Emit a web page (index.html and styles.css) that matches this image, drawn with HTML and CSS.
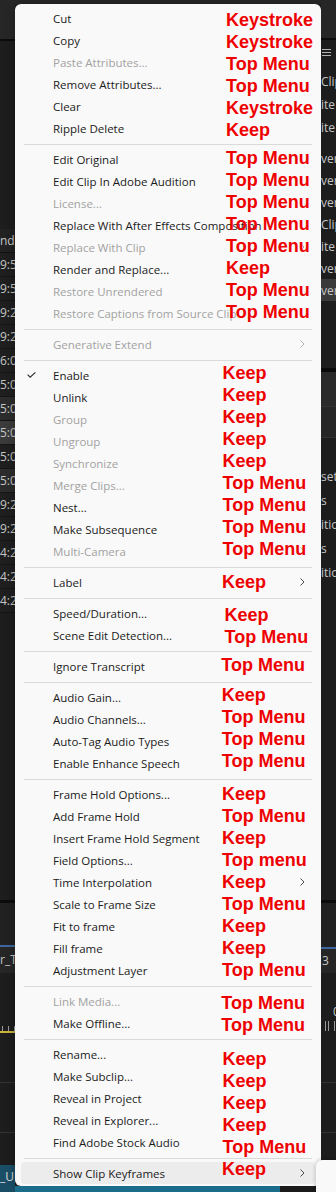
FILE: index.html
```html
<!DOCTYPE html>
<html lang="en">
<head>
    <meta charset="UTF-8">
    <title>Clip context menu</title>
    <link rel="stylesheet" href="styles.css">
</head>
<body>
    <div class="stage">
        <!-- timeline panel peeking out on the left -->
        <aside class="side side-left">
            <div class="p-head"></div>
            <div class="p-rule"></div>
            <div class="p-dark"></div>
            <div class="p-colhead">nd</div>
            <div class="p-row">9:55</div>
            <div class="p-row">9:55</div>
            <div class="p-row">9:22</div>
            <div class="p-row">9:22</div>
            <div class="p-row">6:01</div>
            <div class="p-row">5:00</div>
            <div class="p-row alt">5:00</div>
            <div class="p-row sel">5:00</div>
            <div class="p-row">5:00</div>
            <div class="p-row alt">5:00</div>
            <div class="p-row">9:22</div>
            <div class="p-row">9:22</div>
            <div class="p-row">4:22</div>
            <div class="p-row">4:22</div>
            <div class="p-row">4:22</div>
            <div class="p-dark"></div>
            <div class="p-rule"></div>
            <div class="p-mid"></div>
            <div class="p-blue"></div>
            <div class="p-tab">r_T</div>
            <div class="p-dark"></div>
            <div class="p-ticks"></div>
            <div class="p-yellow"></div>
            <div class="p-dark"></div>
            <div class="p-line"></div>
            <div class="p-dark"></div>
            <div class="p-line"></div>
            <div class="p-dark"></div>
            <div class="p-clip">_UH</div>
        </aside>

        <div class="center">
            <div class="center-top"></div>

            <div class="menu">
                <div class="group g-edit">
                    <div class="item">Cut<span class="note">Keystroke</span></div>
                    <div class="item">Copy<span class="note">Keystroke</span></div>
                    <div class="item off">Paste Attributes...<span class="note">Top Menu</span></div>
                    <div class="item">Remove Attributes...<span class="note">Top Menu</span></div>
                    <div class="item">Clear<span class="note">Keystroke</span></div>
                    <div class="item">Ripple Delete<span class="note">Keep</span></div>
                </div>
                <div class="sep"></div>
                <div class="group g-source">
                    <div class="item">Edit Original<span class="note">Top Menu</span></div>
                    <div class="item">Edit Clip In Adobe Audition<span class="note">Top Menu</span></div>
                    <div class="item off">License...<span class="note">Top Menu</span></div>
                    <div class="item">Replace With After Effects Composition<span class="note">Top Menu</span></div>
                    <div class="item off">Replace With Clip<span class="arrow"><svg width="5" height="8" viewBox="0 0 5 8"><path d="M0.5 0.5L4 4L0.5 7.5"/></svg></span><span class="note">Top Menu</span></div>
                    <div class="item">Render and Replace...<span class="note">Keep</span></div>
                    <div class="item off">Restore Unrendered<span class="note">Top Menu</span></div>
                    <div class="item off">Restore Captions from Source Clip<span class="note">Top Menu</span></div>
                </div>
                <div class="sep"></div>
                <div class="group">
                    <div class="item off">Generative Extend<span class="arrow"><svg width="5" height="8" viewBox="0 0 5 8"><path d="M0.5 0.5L4 4L0.5 7.5"/></svg></span></div>
                </div>
                <div class="sep"></div>
                <div class="group g-link">
                    <div class="item"><span class="check"><svg width="9" height="6" viewBox="0 0 9 6"><path d="M0.6 2.6L3.2 5.2L8.4 0.4"/></svg></span>Enable<span class="note">Keep</span></div>
                    <div class="item">Unlink<span class="note">Keep</span></div>
                    <div class="item off">Group<span class="note">Keep</span></div>
                    <div class="item off">Ungroup<span class="note">Keep</span></div>
                    <div class="item off">Synchronize<span class="note">Keep</span></div>
                    <div class="item off">Merge Clips...<span class="note">Top Menu</span></div>
                    <div class="item">Nest...<span class="note">Top Menu</span></div>
                    <div class="item">Make Subsequence<span class="note">Top Menu</span></div>
                    <div class="item off">Multi-Camera<span class="arrow"><svg width="5" height="8" viewBox="0 0 5 8"><path d="M0.5 0.5L4 4L0.5 7.5"/></svg></span><span class="note">Top Menu</span></div>
                </div>
                <div class="sep"></div>
                <div class="group g-label">
                    <div class="item">Label<span class="arrow"><svg width="5" height="8" viewBox="0 0 5 8"><path d="M0.5 0.5L4 4L0.5 7.5"/></svg></span><span class="note">Keep</span></div>
                </div>
                <div class="sep"></div>
                <div class="group g-speed">
                    <div class="item">Speed/Duration...<span class="note">Keep</span></div>
                    <div class="item">Scene Edit Detection...<span class="note">Top Menu</span></div>
                </div>
                <div class="sep"></div>
                <div class="group g-transcript">
                    <div class="item">Ignore Transcript<span class="note">Top Menu</span></div>
                </div>
                <div class="sep"></div>
                <div class="group g-audio">
                    <div class="item">Audio Gain...<span class="note">Keep</span></div>
                    <div class="item">Audio Channels...<span class="note">Top Menu</span></div>
                    <div class="item">Auto-Tag Audio Types<span class="note">Top Menu</span></div>
                    <div class="item">Enable Enhance Speech<span class="note">Top Menu</span></div>
                </div>
                <div class="sep"></div>
                <div class="group g-frame">
                    <div class="item">Frame Hold Options...<span class="note">Keep</span></div>
                    <div class="item">Add Frame Hold<span class="note">Top Menu</span></div>
                    <div class="item">Insert Frame Hold Segment<span class="note">Keep</span></div>
                    <div class="item">Field Options...<span class="note">Top menu</span></div>
                    <div class="item">Time Interpolation<span class="arrow"><svg width="5" height="8" viewBox="0 0 5 8"><path d="M0.5 0.5L4 4L0.5 7.5"/></svg></span><span class="note">Keep</span></div>
                    <div class="item">Scale to Frame Size<span class="note">Top Menu</span></div>
                    <div class="item">Fit to frame<span class="note">Keep</span></div>
                    <div class="item">Fill frame<span class="note">Keep</span></div>
                    <div class="item">Adjustment Layer<span class="note">Top Menu</span></div>
                </div>
                <div class="sep"></div>
                <div class="group g-media">
                    <div class="item off">Link Media...<span class="note">Top Menu</span></div>
                    <div class="item">Make Offline...<span class="note">Top Menu</span></div>
                </div>
                <div class="sep"></div>
                <div class="group g-project">
                    <div class="item">Rename...<span class="note">Keep</span></div>
                    <div class="item">Make Subclip...<span class="note">Keep</span></div>
                    <div class="item">Reveal in Project<span class="note">Keep</span></div>
                    <div class="item">Reveal in Explorer...<span class="note">Keep</span></div>
                    <div class="item">Find Adobe Stock Audio<span class="note">Top Menu</span></div>
                </div>
                <div class="sep"></div>
                <div class="group g-keys">
                    <div class="item hover">Show Clip Keyframes<span class="arrow"><svg width="5" height="8" viewBox="0 0 5 8"><path d="M0.5 0.5L4 4L0.5 7.5"/></svg></span><span class="note">Keep</span></div>
                </div>
            </div>

            <div class="center-bottom"><span class="bottom-clip"></span></div>
        </div>

        <!-- effects / project panel on the right -->
        <aside class="side side-right">
            <div class="p-head"></div>
            <div class="p-rule"></div>
            <div class="p-burger"><svg width="9" height="9" viewBox="0 0 9 9"><path d="M0 1.5H9M0 4.5H9M0 7.5H9"/></svg></div>
            <div class="p-item">Clip</div>
            <div class="p-item">ite</div>
            <div class="p-item">ite</div>
            <div class="p-dark"></div>
            <div class="p-item">ver</div>
            <div class="p-item">ver</div>
            <div class="p-item">ver</div>
            <div class="p-item">Clip</div>
            <div class="p-item">ite</div>
            <div class="p-item">ver</div>
            <div class="p-item sel">ver</div>
            <div class="p-dark"></div>
            <div class="p-black"></div>
            <div class="p-bar"></div>
            <div class="p-line"></div>
            <div class="p-bar2"></div>
            <div class="p-line"></div>
            <div class="p-dark"></div>
            <div class="p-row">sets</div>
            <div class="p-row">s</div>
            <div class="p-row">itio</div>
            <div class="p-row">s</div>
            <div class="p-row">itio</div>
            <div class="p-dark"></div>
            <div class="p-rule"></div>
            <div class="p-mid"></div>
            <div class="p-blue"></div>
            <div class="p-tab">3</div>
            <div class="p-dark"></div>
            <div class="p-time">0</div>
            <div class="p-ticks"></div>
            <div class="p-dark"></div>
            <div class="p-line"></div>
            <div class="p-dark"></div>
            <div class="p-line"></div>
            <div class="p-dark"></div>
        </aside>

        <div class="submenu"></div>
    </div>
</body>
</html>
```
FILE: styles.css
```css
:root {
    --menu-bg: #f9f9f9;
    --menu-text: #1b1b1b;
    --menu-off: #a2a2a2;
    --menu-sep: #dadada;
    --menu-hover: #ececec;
    --note-red: #ee0000;
    --panel-bg: #1d1d1d;
    --panel-text: #c6c6c6;
}

* {
    margin: 0;
    padding: 0;
    box-sizing: border-box;
}

body {
    background-color: var(--panel-bg);
    font-family: 'Open Sans', 'Noto Sans', sans-serif;
}

.stage {
    position: relative;
    display: grid;
    grid-template-columns: 15px 306px 15px;
    width: 336px;
    height: 1192px;
    overflow: hidden;
}

/* ---------- panels behind the menu ---------- */

.side {
    display: grid;
    overflow: hidden;
    font-size: 12px;
    color: var(--panel-text);
    white-space: nowrap;
}

.side > div {
    overflow: hidden;
    background-color: var(--panel-bg);
}

.side-left {
    grid-template-rows: 39px 2px 188px 24px repeat(15, 24px) 287px 3px 42px 2px 26px 53px 5px 2px 49px 1px 49px 1px 32px 27px;
}

.side-right {
    grid-template-rows: 38px 2px 30px repeat(3, 23px) 8px repeat(7, 22px) 67px 4px 34px 1px 30px 1px 27px repeat(5, 24px) 315px 3px 44px 2px 24px 30px 18px 10px 51px 1px 49px 1px 59px;
}

.side .p-head {
    background-color: #262626;
}

.side .p-rule {
    background-color: #0c0c0c;
}

.side .p-line {
    background-color: #333333;
}

.side .p-mid {
    background-color: #212121;
}

.side .p-blue {
    background-color: #3d67a0;
}

.side .p-tab {
    background-color: #262626;
    line-height: 26px;
}

.side-right .p-tab {
    line-height: 24px;
    padding-left: 1px;
}

.side .p-colhead {
    background-color: #222222;
    border-bottom: 1px solid #111111;
    line-height: 23px;
}

.side .p-row {
    background-color: #1f1f1f;
    border-bottom: 1px solid #141414;
    line-height: 23px;
}

.side .p-row.alt {
    background-color: #2c2c2c;
}

.side .p-row.sel {
    background-color: #3b3b3b;
}

.side-right .p-row {
    border-bottom: none;
    background-color: var(--panel-bg);
    line-height: 24px;
}

.side .p-ticks {
    background-image: repeating-linear-gradient(90deg, #9a9a9a 0 1px, transparent 1px 6px);
    background-position: 2px 0;
}

.side-right .p-ticks {
    background-position: 7px 0;
}

.side .p-yellow {
    background-color: #cbb43c;
}

.side .p-clip {
    background-color: #1a4e66;
    color: #dcdcdc;
    line-height: 24px;
}

.side .p-burger {
    padding: 8px 0 0 1px;
}

.p-burger svg {
    display: block;
    stroke: #b4b4b4;
    stroke-width: 1;
}

.side .p-item {
    line-height: 23px;
}

.side .p-item.sel {
    background-color: #3a3a3a;
}

.side .p-black {
    background-color: #0a0a0a;
}

.side .p-bar {
    background-color: #2a2a2a;
}

.side .p-bar2 {
    background-color: #262626;
}

.side .p-time {
    line-height: 18px;
    padding-left: 12px;
}

/* ---------- middle column ---------- */

.center {
    display: flex;
    flex-direction: column;
}

.center-top {
    height: 4px;
    background-color: #262626;
}

.center-bottom {
    display: flex;
    flex: 1;
    background-color: #1b1b1b;
}

.bottom-clip {
    width: 265px;
    background-color: #1c6d8b;
}

/* ---------- context menu ---------- */

.menu {
    background-color: var(--menu-bg);
    border-radius: 6px;
    padding: 3px 0 2px;
    box-shadow: 0 2px 8px rgba(0, 0, 0, 0.35);
}

.group {
    --nx: 201px;
    --ny: 0px;
}

.g-edit { --nx: 205px; --ny: 2px; }
.g-source { --nx: 205px; --ny: -1px; }
.g-link { --nx: 201.5px; --ny: -2px; }
.g-label { --nx: 201px; --ny: 0px; }
.g-speed { --nx: 203.5px; --ny: 2px; }
.g-transcript { --nx: 200.3px; --ny: -1px; }
.g-audio { --nx: 200.8px; --ny: -2px; }
.g-frame { --nx: 201px; --ny: 0px; }
.g-media { --nx: 200.3px; --ny: 2px; }
.g-project { --nx: 201.5px; --ny: 5px; }
.g-keys { --nx: 201px; --ny: -4.5px; }

.item {
    position: relative;
    display: flex;
    align-items: center;
    height: 22px;
    margin: 0 6px;
    padding: 0 10px 0 32px;
    font-size: 11.5px;
    color: var(--menu-text);
    white-space: nowrap;
    border-radius: 4px;
}

.item.off {
    color: var(--menu-off);
}

.item.hover {
    background-color: var(--menu-hover);
}

.check {
    display: flex;
    width: 26px;
    margin-left: -26px;
}

.check svg {
    fill: none;
    stroke: #2a2a2a;
    stroke-width: 1.1;
}

.arrow {
    display: flex;
    margin-left: auto;
}

.arrow svg {
    fill: none;
    stroke: #4a4a4a;
    stroke-width: 1;
}

.item.off .arrow svg {
    stroke: #b0b0b0;
}

.sep {
    height: 1px;
    margin: 5px 9px 3px;
    background-color: var(--menu-sep);
}

/* red hand-written notes pasted over the screenshot */
.note {
    position: absolute;
    z-index: 1;
    left: var(--nx);
    top: var(--ny);
    font-family: 'Liberation Sans', Arial, sans-serif;
    font-size: 18px;
    font-weight: bold;
    line-height: 22px;
    color: var(--note-red);
}

.submenu {
    position: absolute;
    left: 316px;
    top: 1160px;
    width: 40px;
    height: 40px;
    background-color: var(--menu-bg);
    border-radius: 6px 0 0 0;
    box-shadow: 0 0 4px rgba(0, 0, 0, 0.3);
}
```
